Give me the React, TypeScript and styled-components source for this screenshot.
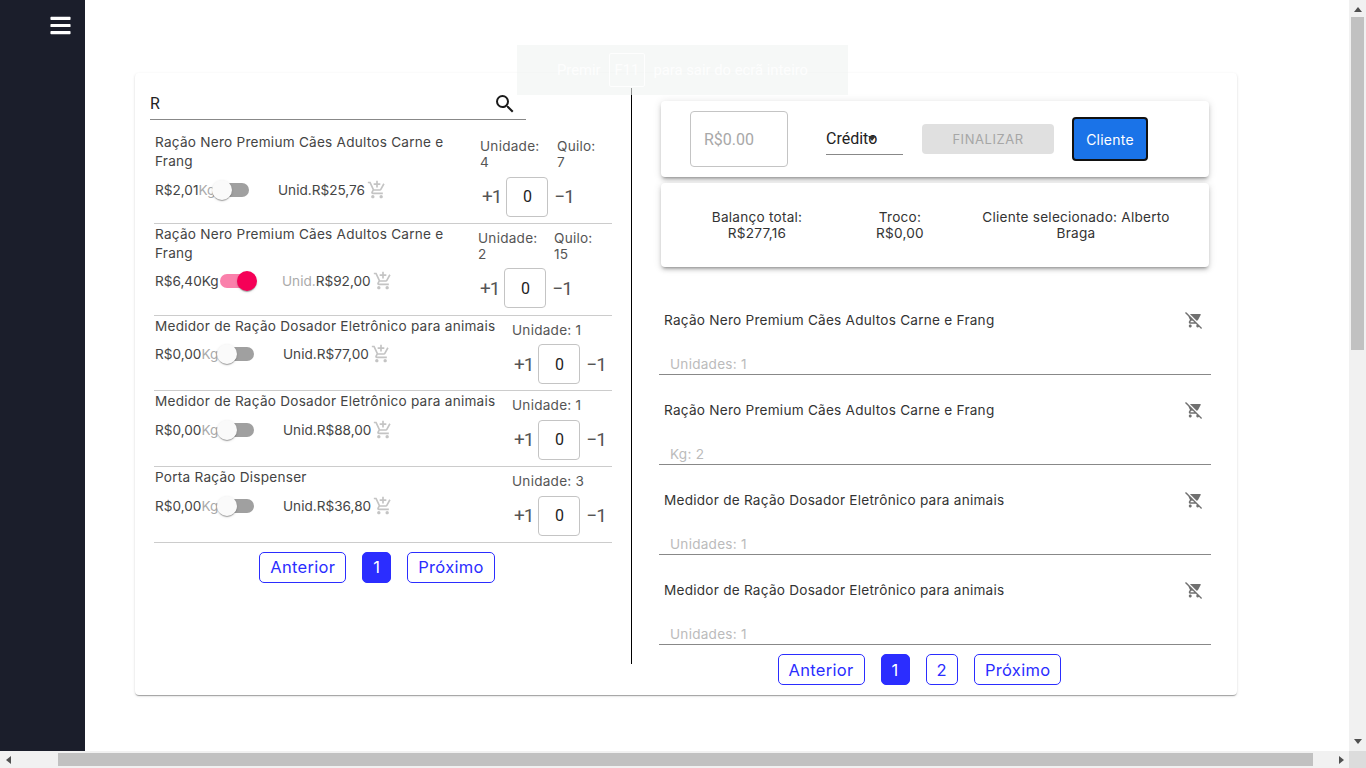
import React from 'react'
import styled, { createGlobalStyle } from 'styled-components'
import { FaBars } from 'react-icons/fa'
import { MdAddShoppingCart, MdRemoveShoppingCart, MdSearch } from 'react-icons/md'

type TProduct = {
  name: string
  kgPrice: string
  unitPrice: string
  unit: string
  kilo?: string
  checked?: boolean
  infoWidth: number
  labelsWidth: number
  switchShift: number
  unitShift: number
}

const products: TProduct[] = [
  { name: 'Ração Nero Premium Cães Adultos Carne e Frang', kgPrice: 'R$2,01', unitPrice: 'R$25,76', unit: '4', kilo: '7', infoWidth: 326, labelsWidth: 77, switchShift: -2, unitShift: 29 },
  { name: 'Ração Nero Premium Cães Adultos Carne e Frang', kgPrice: 'R$6,40', unitPrice: 'R$92,00', unit: '2', kilo: '15', checked: true, infoWidth: 324, labelsWidth: 76, switchShift: 4, unitShift: 27 },
  { name: 'Medidor de Ração Dosador Eletrônico para animais', kgPrice: 'R$0,00', unitPrice: 'R$77,00', unit: '1', infoWidth: 358, labelsWidth: 0, switchShift: 3, unitShift: 29 },
  { name: 'Medidor de Ração Dosador Eletrônico para animais', kgPrice: 'R$0,00', unitPrice: 'R$88,00', unit: '1', infoWidth: 358, labelsWidth: 0, switchShift: 3, unitShift: 29 },
  { name: 'Porta Ração Dispenser', kgPrice: 'R$0,00', unitPrice: 'R$36,80', unit: '3', infoWidth: 358, labelsWidth: 0, switchShift: 3, unitShift: 29 },
]

const cartItems = [
  { name: 'Ração Nero Premium Cães Adultos Carne e Frang', amount: 'Unidades: 1' },
  { name: 'Ração Nero Premium Cães Adultos Carne e Frang', amount: 'Kg: 2' },
  { name: 'Medidor de Ração Dosador Eletrônico para animais', amount: 'Unidades: 1' },
  { name: 'Medidor de Ração Dosador Eletrônico para animais', amount: 'Unidades: 1' },
]

const App = () => {
  return (
    <>
      <GlobalStyle />
      <Screen>
        <Viewport>
          <Sidebar>
            <MenuButton>
              <FaBars size={23} />
            </MenuButton>
          </Sidebar>
          <Content>
            <Card>
              <LeftColumn>
                <SearchBar>
                  <SearchText>R</SearchText>
                  <MdSearch size={24} color="#1a1a1a" />
                </SearchBar>
                <ProductList>
                  {products.map((product, index) => (
                    <ProductRow key={index}>
                      <ProductInfo $width={product.infoWidth}>
                        <ProductName>{product.name}</ProductName>
                        <PriceRow>
                          <KgPrice>
                            {product.kgPrice}
                            <Muted $on={product.checked}>Kg</Muted>
                          </KgPrice>
                          <Switch $on={product.checked} $shift={product.switchShift}>
                            <SwitchThumb $on={product.checked} />
                          </Switch>
                          <UnitPrice $shift={product.unitShift}>
                            <Muted $on={!product.checked}>Unid.</Muted>
                            {product.unitPrice}
                          </UnitPrice>
                          <CartIcon>
                            <MdAddShoppingCart size={20} />
                          </CartIcon>
                        </PriceRow>
                      </ProductInfo>
                      <Quantity>
                        <Labels>
                          {product.kilo ? (
                            <>
                              <Label $width={product.labelsWidth}>
                                Unidade:
                                <br />
                                {product.unit}
                              </Label>
                              <Label>
                                Quilo:
                                <br />
                                {product.kilo}
                              </Label>
                            </>
                          ) : (
                            <Label>Unidade: {product.unit}</Label>
                          )}
                        </Labels>
                        <Stepper>
                          <StepText>+1</StepText>
                          <StepInput>0</StepInput>
                          <StepText>−1</StepText>
                        </Stepper>
                      </Quantity>
                    </ProductRow>
                  ))}
                </ProductList>
                <Pagination $width={454}>
                  <PageButton>Anterior</PageButton>
                  <PageButton $active>1</PageButton>
                  <PageButton>Próximo</PageButton>
                </Pagination>
              </LeftColumn>
              <RightColumn>
                <Panel>
                  <PaymentRow>
                    <MoneyInput>R$0.00</MoneyInput>
                    <SelectBox>
                      Crédito
                      <SelectArrow />
                    </SelectBox>
                    <FinishButton>Finalizar</FinishButton>
                    <ClientButton>Cliente</ClientButton>
                  </PaymentRow>
                </Panel>
                <Panel>
                  <SummaryRow>
                    <SummaryCell $width={192}>
                      Balanço total:
                      <br />
                      R$277,16
                    </SummaryCell>
                    <SummaryCell $width={94}>
                      Troco:
                      <br />
                      R$0,00
                    </SummaryCell>
                    <SummaryCell $width={200}>Cliente selecionado: Alberto Braga</SummaryCell>
                  </SummaryRow>
                </Panel>
                <CartList>
                  {cartItems.map((item, index) => (
                    <CartRow key={index}>
                      <CartRowTop>
                        <CartName>{item.name}</CartName>
                        <RemoveIcon>
                          <MdRemoveShoppingCart size={18} />
                        </RemoveIcon>
                      </CartRowTop>
                      <CartAmount>{item.amount}</CartAmount>
                    </CartRow>
                  ))}
                </CartList>
                <Pagination $width={521}>
                  <PageButton>Anterior</PageButton>
                  <PageButton $active>1</PageButton>
                  <PageButton>2</PageButton>
                  <PageButton>Próximo</PageButton>
                </Pagination>
              </RightColumn>
            </Card>
          </Content>
          <FullscreenNotice>
            Premir <KeyCap>F11</KeyCap> para sair do ecrã inteiro
          </FullscreenNotice>
        </Viewport>
        <VerticalBar>
          <ArrowUp />
          <VerticalThumb />
          <ArrowDown />
        </VerticalBar>
        <HorizontalBar>
          <ArrowLeft />
          <HorizontalThumb />
          <ArrowRight />
        </HorizontalBar>
        <BarCorner />
      </Screen>
    </>
  )
}

export default App

const sans = `Inter, "Noto Sans", sans-serif`
const roboto = `Roboto, "Liberation Sans", sans-serif`

const GlobalStyle = createGlobalStyle`
  html, body {
    margin: 0;
    height: 100%;
    overflow: hidden;
    background: #fff;
  }
  #root {
    height: 100%;
  }
`

const Screen = styled.div`
  display: grid;
  grid-template-columns: 1349px 17px;
  grid-template-rows: 751px 17px;
  height: 768px;
  font-family: ${sans};
  font-size: 13.6px;
  letter-spacing: 0.24px;
  color: #333;
`

const Viewport = styled.div`
  position: relative;
  display: flex;
  overflow: hidden;
`

const Sidebar = styled.aside`
  flex: 0 0 85px;
  background: #1b1e2b;
  display: flex;
  justify-content: flex-end;
  align-items: flex-start;
`

const MenuButton = styled.div`
  color: #fff;
  display: flex;
  margin: 14px 13px 0 0;
`

const Content = styled.main`
  flex: 1;
  padding: 73px 0 0 50px;
`

const Card = styled.section`
  width: 1102px;
  height: 622px;
  box-sizing: border-box;
  padding: 15px 0 0;
  display: flex;
  align-items: flex-start;
  background: #fff;
  border-radius: 4px;
  box-shadow: 0 2px 1px -1px rgba(0, 0, 0, 0.2), 0 1px 1px 0 rgba(0, 0, 0, 0.14), 0 1px 3px 0 rgba(0, 0, 0, 0.12);
`

const LeftColumn = styled.div`
  width: 497px;
  height: 576px;
  box-sizing: border-box;
  border-right: 1px solid #000;
  padding-left: 15px;
`

const SearchBar = styled.div`
  width: 376px;
  height: 32px;
  box-sizing: border-box;
  border-bottom: 1px solid #888;
  display: flex;
  align-items: center;
  justify-content: space-between;
  padding-right: 9px;
`

const SearchText = styled.span`
  font-family: ${roboto};
  font-size: 16px;
  letter-spacing: 0;
  color: #222;
`

const ProductList = styled.div`
  width: 458px;
  margin: 12.2px 0 9px 4px;
`

const ProductRow = styled.div`
  display: flex;
  border-bottom: 1px solid #ccc;
`

const ProductInfo = styled.div<{ $width: number }>`
  flex: 0 0 ${(props) => props.$width}px;
`

const ProductName = styled.div`
  line-height: 19px;
  padding: 1px 0 0 1px;
  color: #444;
`

const PriceRow = styled.div`
  display: flex;
  align-items: center;
  height: 19px;
  margin-top: 9px;
  padding-left: 1px;
  letter-spacing: 0;
  color: #444;
`

const KgPrice = styled.span`
  flex: 0 0 61px;
  min-width: 0;
  white-space: nowrap;
`

const Muted = styled.span<{ $on?: boolean }>`
  color: ${(props) => (props.$on ? '#444' : '#aaa')};
`

const Switch = styled.div<{ $on?: boolean; $shift: number }>`
  position: relative;
  flex: 0 0 35px;
  height: 14px;
  margin-left: ${(props) => props.$shift}px;
  border-radius: 7px;
  background: ${(props) => (props.$on ? '#fa80ab' : '#a0a0a0')};
`

const SwitchThumb = styled.div<{ $on?: boolean }>`
  position: absolute;
  top: -3px;
  left: ${(props) => (props.$on ? '17px' : '-2px')};
  width: 20px;
  height: 20px;
  border-radius: 50%;
  background: ${(props) => (props.$on ? '#f50057' : '#fafafa')};
  box-shadow: 0 2px 1px -1px rgba(0, 0, 0, 0.2), 0 1px 1px 0 rgba(0, 0, 0, 0.14), 0 1px 3px 0 rgba(0, 0, 0, 0.12);
`

const UnitPrice = styled.span<{ $shift: number }>`
  margin-left: ${(props) => props.$shift}px;
  white-space: nowrap;
`

const CartIcon = styled.span`
  display: flex;
  margin-left: 2px;
  color: #c4c4c4;
`

const Quantity = styled.div`
  flex: 1;
  padding-top: 6px;
`

const Labels = styled.div`
  display: flex;
  line-height: 16px;
  color: #555;
`

const Label = styled.div<{ $width?: number }>`
  ${(props) => (props.$width ? `flex: 0 0 ${props.$width}px;` : '')}
`

const Stepper = styled.div`
  display: flex;
  align-items: center;
  margin: 6.4px 0 6.35px 2px;
`

const StepText = styled.span`
  font-family: ${roboto};
  font-size: 19px;
  letter-spacing: -1px;
  color: #555;
`

const StepInput = styled.div`
  width: 42px;
  height: 40px;
  box-sizing: border-box;
  margin: 0 6px 0 5px;
  border: 1px solid #c4c4c4;
  border-radius: 4px;
  display: flex;
  align-items: center;
  justify-content: center;
  font-family: ${roboto};
  font-size: 16px;
  letter-spacing: 0;
  color: #222;
`

const Pagination = styled.nav<{ $width: number }>`
  width: ${(props) => props.$width}px;
  display: flex;
  justify-content: center;
  gap: 16px;
`

const PageButton = styled.div<{ $active?: boolean }>`
  height: 31px;
  box-sizing: border-box;
  padding: 0 10px;
  display: flex;
  align-items: center;
  border: 1px solid #2b2dff;
  border-radius: 5px;
  font-size: 16.5px;
  letter-spacing: 0.3px;
  color: ${(props) => (props.$active ? '#fff' : '#2b2dff')};
  background: ${(props) => (props.$active ? '#2b2dff' : '#fff')};
`

const RightColumn = styled.div`
  width: 552px;
  margin: 13px 0 0 27px;
`

const Panel = styled.div`
  width: 548px;
  margin: 0 0 6px 2px;
  border-radius: 4px;
  background: #fff;
  box-shadow: 0 3px 3px -2px rgba(0, 0, 0, 0.3), 0 3px 4px 0 rgba(0, 0, 0, 0.14), 0 1px 8px 0 rgba(0, 0, 0, 0.12);
`

const PaymentRow = styled.div`
  height: 76px;
  box-sizing: border-box;
  padding-left: 29px;
  display: flex;
  align-items: center;
`

const MoneyInput = styled.div`
  width: 98px;
  height: 56px;
  box-sizing: border-box;
  padding-left: 13px;
  display: flex;
  align-items: center;
  border: 1px solid #c4c4c4;
  border-radius: 4px;
  font-family: ${roboto};
  font-size: 16px;
  letter-spacing: 0;
  color: #a8a8a8;
`

const SelectBox = styled.div`
  position: relative;
  width: 77px;
  height: 32px;
  box-sizing: border-box;
  margin: 0 19px 0 38px;
  border-bottom: 1px solid #888;
  font-family: ${roboto};
  font-size: 16px;
  letter-spacing: 0;
  line-height: 31px;
  color: #222;
`

const SelectArrow = styled.span`
  position: absolute;
  left: 42px;
  top: 13px;
  border-left: 4px solid transparent;
  border-right: 4px solid transparent;
  border-top: 5px solid #333;
`

const FinishButton = styled.div`
  width: 132px;
  height: 30px;
  display: flex;
  align-items: center;
  justify-content: center;
  border-radius: 4px;
  background: #e0e0e0;
  color: #a6a6a6;
  font-size: 13px;
  letter-spacing: 0.55px;
  text-transform: uppercase;
`

const ClientButton = styled.div`
  width: 76px;
  height: 44px;
  box-sizing: border-box;
  margin-left: 18px;
  display: flex;
  align-items: center;
  justify-content: center;
  border: 2px solid #111;
  border-radius: 4px;
  background: #1a73e8;
  color: #fff;
  font-size: 14px;
`

const SummaryRow = styled.div`
  height: 84px;
  box-sizing: border-box;
  padding: 26px 0 0 0;
  display: flex;
`

const SummaryCell = styled.div<{ $width: number }>`
  flex: 0 0 ${(props) => props.$width}px;
  text-align: center;
  line-height: 16px;
  color: #333;
  &:last-child {
    margin-left: 29px;
  }
`

const CartList = styled.div`
  margin: 18px 0 9px;
`

const CartRow = styled.div`
  height: 90px;
  box-sizing: border-box;
  padding: 0 8px 0 5px;
  border-bottom: 1px solid #888;
  display: flex;
  flex-direction: column;
  justify-content: flex-end;
`

const CartRowTop = styled.div`
  display: flex;
  align-items: center;
  justify-content: space-between;
  height: 20px;
  margin-bottom: 24px;
`

const CartName = styled.span`
  color: #333;
`

const RemoveIcon = styled.span`
  display: flex;
  color: #707070;
`

const CartAmount = styled.div`
  height: 20px;
  padding-left: 6px;
  line-height: 20px;
  color: #bbb;
`

const FullscreenNotice = styled.div`
  position: absolute;
  left: 517px;
  top: 45px;
  width: 331px;
  height: 50px;
  box-sizing: border-box;
  display: flex;
  align-items: center;
  justify-content: center;
  gap: 8px;
  background: rgba(240, 243, 242, 0.6);
  color: rgba(255, 255, 255, 0.85);
  font-family: ${roboto};
  font-size: 14.8px;
  letter-spacing: 0;
`

const KeyCap = styled.span`
  height: 34px;
  box-sizing: border-box;
  padding: 0 5px;
  display: flex;
  align-items: center;
  border: 1px solid rgba(255, 255, 255, 0.85);
  border-radius: 2px;
`

const VerticalBar = styled.div`
  background: #f1f1f1;
  display: flex;
  flex-direction: column;
  align-items: center;
`

const VerticalThumb = styled.div`
  width: 13px;
  height: 333px;
  margin-top: 5px;
  background: #c1c1c1;
`

const HorizontalBar = styled.div`
  background: #f1f1f1;
  display: flex;
  align-items: center;
  padding-left: 6px;
`

const HorizontalThumb = styled.div`
  width: 1255px;
  height: 13px;
  margin-left: 47px;
  background: #c1c1c1;
`

const BarCorner = styled.div`
  background: #dcdcdc;
`

const ArrowUp = styled.span`
  margin-top: 7px;
  border-left: 4px solid transparent;
  border-right: 4px solid transparent;
  border-bottom: 5px solid #505050;
`

const ArrowDown = styled.span`
  margin-top: auto;
  margin-bottom: 7px;
  border-left: 4px solid transparent;
  border-right: 4px solid transparent;
  border-top: 5px solid #505050;
`

const ArrowLeft = styled.span`
  border-top: 4px solid transparent;
  border-bottom: 4px solid transparent;
  border-right: 5px solid #505050;
`

const ArrowRight = styled.span`
  margin-left: 26px;
  border-top: 4px solid transparent;
  border-bottom: 4px solid transparent;
  border-left: 5px solid #505050;
`
